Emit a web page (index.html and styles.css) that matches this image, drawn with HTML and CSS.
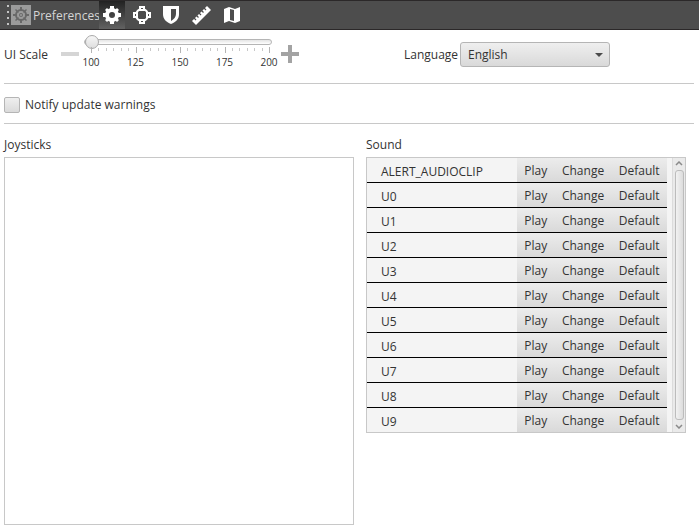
FILE: index.html
```
<!DOCTYPE html>
<html lang="en">
<head>
  <meta charset="UTF-8">
  <title>Preferences</title>
  <link rel="stylesheet" href="styles.css">
</head>
<body>

  <header class="toolbar">
    <svg class="grip" width="4" height="20" viewBox="0 0 4 20">
      <path d="M2 0h2v2H2zM2 6h2v2H2zM2 12h2v2H2zM2 18h2v2H2z" fill="#c4c4c4"/>
    </svg>
    <svg class="logo" width="20" height="20" viewBox="0 0 20 20">
      <rect width="20" height="20" fill="#9b9b9b"/>
      <g fill="#686868">
        <path d="M9 2h2v3H9zM9 15h2v3H9zM2 9h3v2H2zM15 9h3v2h-3zM4 5l1-1 3 3-1 1zM16 5l-1-1-3 3 1 1zM4 15l1 1 3-3-1-1zM16 15l-1 1-3-3 1-1z"/>
        <circle cx="10" cy="10" r="5" fill="none" stroke="#686868" stroke-width="2"/>
        <circle cx="10" cy="10" r="2"/>
      </g>
      <circle cx="10" cy="10" r="1" fill="#9b9b9b"/>
    </svg>
    <h1>Preferences</h1>
    <nav class="tabs">
      <button class="tab active" aria-label="General">
        <svg width="20" height="20" viewBox="0 0 20 20">
          <circle cx="10" cy="10" r="5" fill="none" stroke="#fff" stroke-width="4"/>
          <path d="M8 1h4v4H8zM8 15h4v4H8zM1 8h4v4H1zM15 8h4v4h-4zM3 5l2-2 3 3-2 2zM17 5l-2-2-3 3 2 2zM3 15l2 2 3-3-2-2zM17 15l-2 2-3-3 2-2z" fill="#fff"/>
        </svg>
      </button>
      <button class="tab" aria-label="Devices">
        <svg width="20" height="20" viewBox="0 0 20 20" fill="none" stroke="#fff" stroke-width="2">
          <circle cx="10" cy="10" r="6"/>
          <path d="M8 2h4v3H8zM8 15h4v3H8zM2 8h3v4H2zM15 8h3v4h-3z" fill="#4d4d4d"/>
        </svg>
      </button>
      <button class="tab" aria-label="Security">
        <svg width="20" height="20" viewBox="0 0 20 20">
          <path d="M1 1h16v8c0 5-3 8-8 10C4 17 1 14 1 9z" fill="#fff"/>
          <path d="M9 4h5v5c0 3-2 5-5 7z" fill="#4d4d4d"/>
        </svg>
      </button>
      <button class="tab" aria-label="Units">
        <svg width="20" height="20" viewBox="0 0 20 20">
          <path d="M0 16L15 1l4 4L4 20z" fill="#fff"/>
          <path d="M2 13l2 2M4.500 10.500l2 2M7 8l2 2M9.500 5.500l2 2M12 3l2 2" stroke="#4d4d4d" stroke-width="1.200"/>
        </svg>
      </button>
      <button class="tab" aria-label="Maps">
        <svg width="20" height="20" viewBox="0 0 20 20">
          <path d="M2 4l5-2 6 2 5-2v14l-5 2-6-2-5 2z" fill="#fff"/>
          <path d="M8 4l4 1v11l-4-1z" fill="#4d4d4d"/>
        </svg>
      </button>
    </nav>
  </header>

  <main>
    <section class="general">
      <div class="scale">
        <label for="scale">UI Scale</label>
        <svg class="minus" width="18" height="20" viewBox="0 0 18 20">
          <path d="M0 8h18v4H0z" fill="#d5d5d5"/>
        </svg>
        <div class="slider">
          <input type="range" id="scale" min="100" max="200" value="100">
          <svg class="ticks" width="179" height="6" viewBox="0 0 179 6" id="ticks"></svg>
          <div class="marks">
            <span>100</span><span>125</span><span>150</span><span>175</span><span>200</span>
          </div>
        </div>
        <svg class="plus" width="18" height="20" viewBox="0 0 18 20">
          <path d="M7 1h4v7h7v4h-7v7H7v-7H0V8h7z" fill="#a3a3a3"/>
        </svg>
      </div>
      <div class="language">
        <label for="language">Language</label>
        <span class="select">
          <select id="language">
            <option>English</option>
          </select>
        </span>
      </div>
    </section>

    <section class="updates">
      <input type="checkbox" id="notify">
      <label for="notify">Notify update warnings</label>
    </section>

    <div class="panels">
      <section class="panel">
        <h2>Joysticks</h2>
        <div class="joysticks"></div>
      </section>
      <section class="panel">
        <h2>Sound</h2>
        <div class="sounds">
          <table>
            <tbody id="sounds"></tbody>
          </table>
          <div class="scrollbar">
            <svg width="8" height="5" viewBox="0 0 8 5"><path d="M1 4l3-3 3 3" fill="none" stroke="#8a8a8a" stroke-width="1.5"/></svg>
            <div class="thumb"></div>
            <svg width="8" height="5" viewBox="0 0 8 5"><path d="M1 1l3 3 3-3" fill="none" stroke="#8a8a8a" stroke-width="1.5"/></svg>
          </div>
        </div>
      </section>
    </div>
  </main>

  <script>
    const names = ['ALERT_AUDIOCLIP', 'U0', 'U1', 'U2', 'U3', 'U4', 'U5', 'U6', 'U7', 'U8', 'U9'];

    document.getElementById('sounds').innerHTML = names.map(name => `
      <tr>
        <th scope="row">${name}</th>
        <td><div class="actions">
          <button>Play</button><button>Change</button><button>Default</button>
        </div></td>
      </tr>`).join('');

    // 4 major steps, 6 minor steps in each
    let ticks = '';
    for (let i = 0; i <= 24; i++) {
      const x = Math.round(i * 178 / 24);
      ticks += i % 6 === 0
        ? `<path d="M${x} 0h1v6h-1z" fill="#b4b4b4"/>`
        : `<path d="M${x} 1h1v3h-1z" fill="#c8c8c8"/>`;
    }
    document.getElementById('ticks').innerHTML = ticks;
  </script>

</body>
</html>
```
FILE: styles.css
```
* {
  box-sizing: border-box;
}

body {
  display: flex;
  flex-direction: column;
  min-height: 100vh;
  margin: 0;
  background: #fff;
  color: #333;
  font-family: "Open Sans", "Segoe UI", sans-serif;
  font-size: 12px;
  line-height: 16px;
}

h1, h2 {
  margin: 0;
  font-size: 12px;
  font-weight: normal;
}

button, select {
  font: inherit;
  color: inherit;
}

svg {
  display: block;
  flex: none;
}

.toolbar {
  display: flex;
  align-items: center;
  height: 30px;
  padding-left: 5px;
  background: #4d4d4d;
  border-top: 1px solid #2b2829;
  border-bottom: 1px solid #2b2829;
}

.toolbar h1 {
  width: 66px;
  padding-top: 2px;
  color: #d5d5d5;
}

.logo {
  margin: 0 2px;
}

.tabs {
  display: flex;
}

.tab {
  width: 26px;
  height: 28px;
  margin-right: 4px;
  padding: 4px 3px;
  border: 0;
  background: none;
}

.tab.active {
  background: linear-gradient(#222, #626262);
}

main {
  display: flex;
  flex: 1;
  flex-direction: column;
  padding: 0 5px 2px 4px;
}

.general {
  display: flex;
  height: 54px;
  border-bottom: 1px solid #c8c8c8;
}

.scale {
  display: flex;
  flex: 0 0 400px;
  height: 48px;
  align-items: center;
}

.scale label {
  width: 57px;
}

.scale label,
.language label {
  padding-top: 2px;
}

.slider {
  width: 188px;
  height: 44px;
  margin: 0 9px 0 5px;
}

.slider input {
  display: block;
  width: 188px;
  height: 16px;
  margin: 2px 0 0;
  appearance: none;
  background: none;
}

.slider input::-webkit-slider-runnable-track {
  height: 6px;
  border: 1px solid #b5b5b5;
  border-radius: 3px;
  background: linear-gradient(#e4e4e4, #fff);
}

.slider input::-webkit-slider-thumb {
  width: 14px;
  height: 14px;
  margin-top: -5px;
  appearance: none;
  border: 1px solid #aaa;
  border-radius: 50%;
  background: linear-gradient(#f6f6f6, #dedede);
}

.ticks {
  margin: -3px 0 0 7px;
}

.marks {
  display: flex;
  justify-content: space-between;
  margin: 2px -7px 0 -3px;
  font-size: 10px;
  line-height: 14px;
}

.marks span {
  width: 20px;
  text-align: center;
}

.language {
  display: flex;
  height: 48px;
  align-items: center;
}

.language label {
  width: 56px;
}

.select {
  position: relative;
}

.select::after {
  content: "";
  position: absolute;
  top: 11px;
  right: 7px;
  border: 4px solid transparent;
  border-top-color: #4a4a4a;
  pointer-events: none;
}

.language select {
  display: block;
  width: 150px;
  height: 25px;
  padding: 2px 7px 0;
  appearance: none;
  border: 1px solid #b5b5b5;
  border-radius: 3px;
  background: linear-gradient(#efefef, #d9d9d9);
}

.updates {
  display: flex;
  align-items: center;
  gap: 5px;
  height: 40px;
  padding-top: 2px;
  border-bottom: 1px solid #c8c8c8;
}

.updates input {
  width: 16px;
  height: 16px;
  margin: 0;
  appearance: none;
  border: 1px solid #b5b5b5;
  border-radius: 2px;
  background: linear-gradient(#efefef, #dadada);
}

.updates input:checked {
  background: #6b6b6b;
}

.panels {
  display: grid;
  flex: 1;
  grid-template-columns: 35fr 32fr;
  gap: 12px;
  padding: 13px 8px 0 0;
}

.panel {
  display: flex;
  flex-direction: column;
  gap: 4px;
}

.joysticks {
  flex: 1;
  border: 1px solid #c8c8c8;
}

.sounds {
  display: flex;
  gap: 5px;
  border: 1px solid #c8c8c8;
  background: #f4f4f4;
}

.sounds table {
  flex: 1;
  border-spacing: 0;
}

.sounds th, .sounds td {
  height: 25px;
  padding: 0;
  border-bottom: 1px solid #000;
}

.sounds tr:last-child th,
.sounds tr:last-child td {
  height: 24px;
  border-bottom: 0;
}

.sounds th {
  padding: 3px 0 0 14px;
  font-weight: normal;
  text-align: left;
}

.sounds td {
  width: 150px;
}

.actions {
  display: flex;
  height: 24px;
  background: linear-gradient(#ececec, #d9d9d9);
}

.actions button {
  flex: 1 0 auto;
  padding: 2px 0 0;
  border: 0;
  background: none;
}

.scrollbar {
  display: flex;
  flex-direction: column;
  align-items: center;
  gap: 4px;
  width: 13px;
  padding: 3px 0;
  border-left: 1px solid #dcdcdc;
  background: #eaeaea;
}

.thumb {
  flex: 1;
  width: 9px;
  border: 1px solid #bcbcbc;
  border-radius: 3px;
  background: linear-gradient(to right, #f2f2f2, #dcdcdc);
}
```
